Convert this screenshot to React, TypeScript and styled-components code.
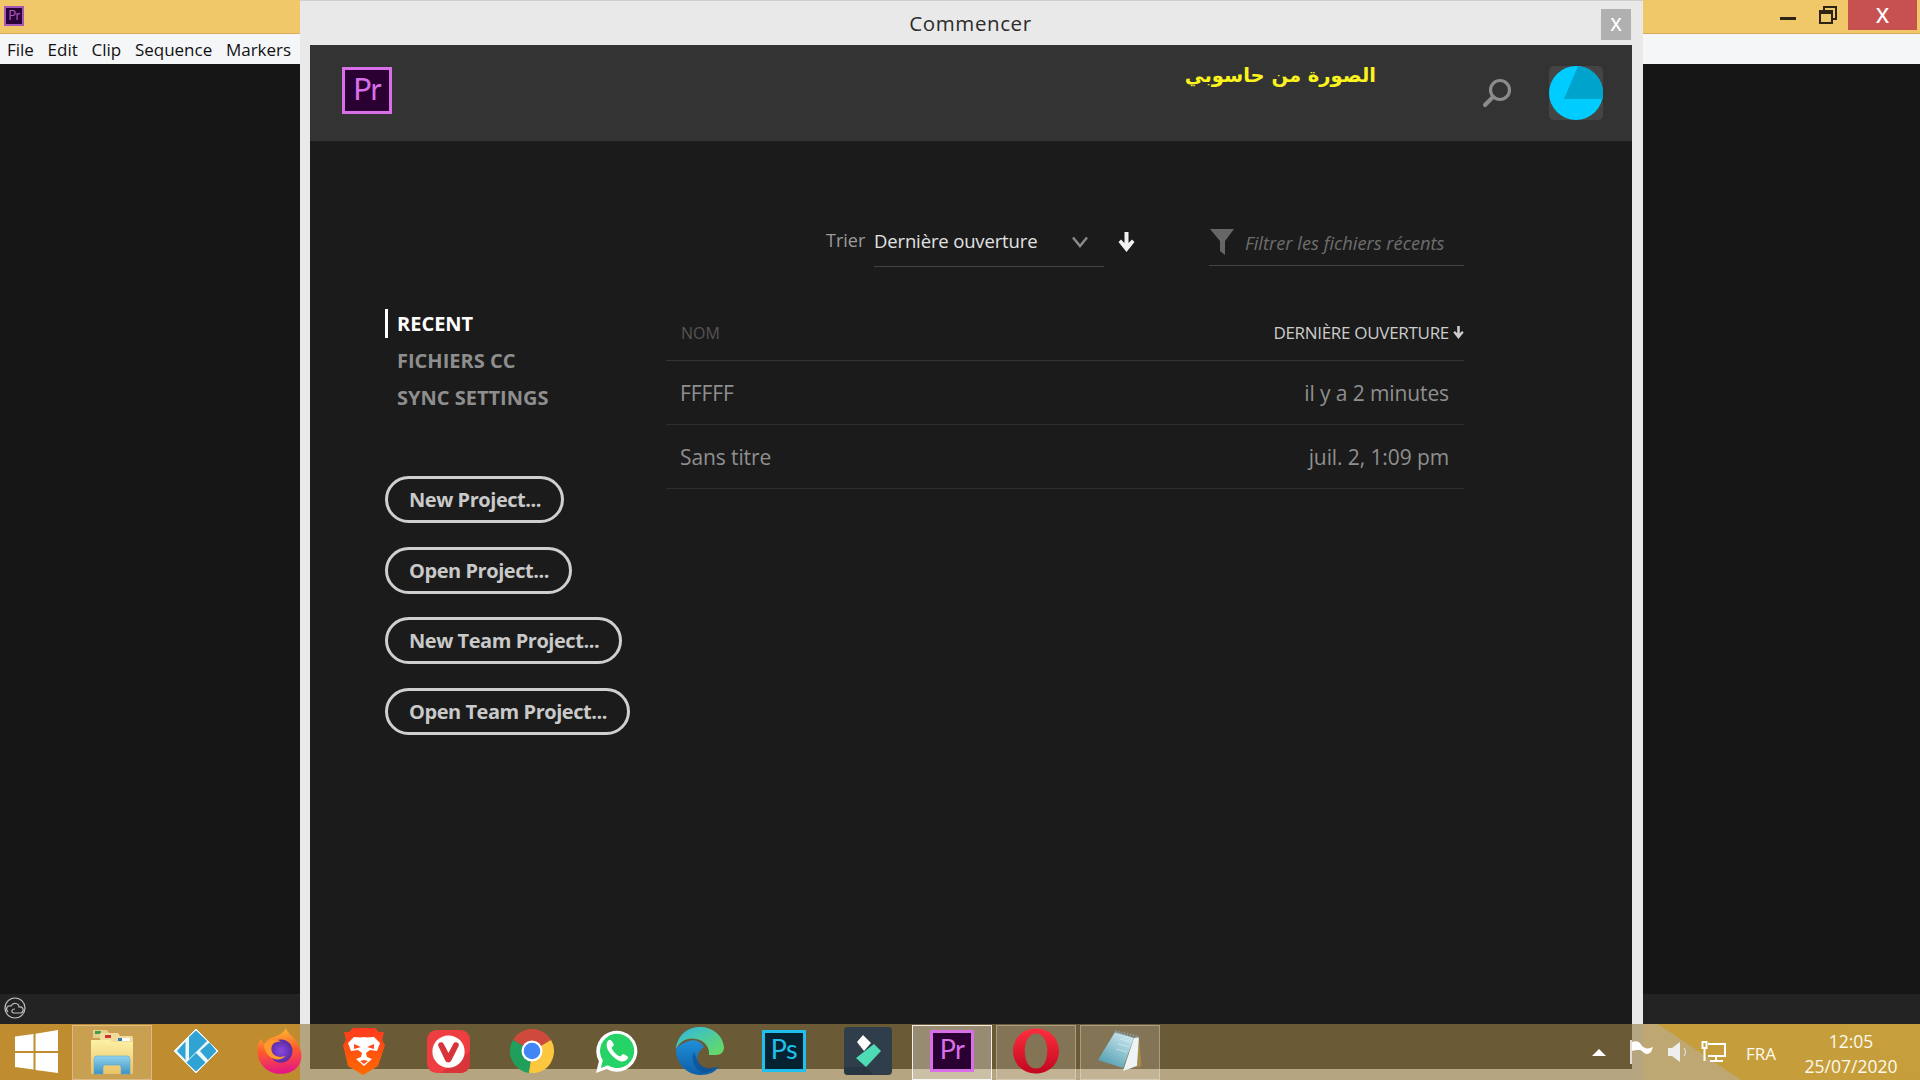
import React from 'react';
import styled, { createGlobalStyle } from 'styled-components';

const Global = createGlobalStyle`
  html, body { margin: 0; padding: 0; background: #161616; overflow: hidden; }
  * { box-sizing: border-box; }
`;

const UI = `"Open Sans", "Noto Sans", sans-serif`;

const Desktop = styled.div`
  position: relative;
  width: 1920px;
  height: 1080px;
  overflow: hidden;
  font-family: ${UI};
  background: linear-gradient(34deg, #bf8d30 0, #bf8d30 800px, #bba876 880px, #bfa772 973px, #c69d3b 974px, #cda645 100%);
`;

const BackWindow = styled.div`
  position: absolute;
  top: 0;
  left: 0;
  width: 1920px;
  height: 1024px;
  display: flex;
  flex-direction: column;
  background: #161616;
`;

const TitleBar = styled.div`
  height: 34px;
  flex: none;
  display: flex;
  align-items: flex-start;
  padding-left: 4px;
  padding-top: 6px;
  background: #f0c869;
  border-bottom: 1px solid #d9ab5b;
`;

const WindowControls = styled.div`
  position: absolute;
  top: 0;
  right: 3px;
  display: flex;
  align-items: flex-start;
`;

const ControlIcon = styled.div`
  width: 40px;
  height: 30px;
  display: flex;
  align-items: center;
  justify-content: center;
`;

const CloseControl = styled.div`
  width: 69px;
  height: 30px;
  padding-bottom: 3px;
  background: #c75050;
  color: #fff;
  font-family: "Liberation Sans", sans-serif;
  font-size: 27px;
  line-height: 24px;
  display: flex;
  align-items: center;
  justify-content: center;
`;

const MenuBar = styled.div`
  height: 30px;
  flex: none;
  display: flex;
  align-items: center;
  padding-left: 7px;
  gap: 13.7px;
  background: #f5f6f8;
  color: #111;
  font-size: 17px;
`;

const Workspace = styled.div`
  flex: 1;
  background: #161616;
`;

const StatusBar = styled.div`
  height: 30px;
  flex: none;
  padding: 0 0 3px 3px;
  display: flex;
  align-items: center;
  background: #232323;
`;

const Dialog = styled.div`
  position: absolute;
  top: 0;
  bottom: 0;
  left: 300px;
  width: 1343px;
  display: flex;
  flex-direction: column;
  background: #e9e9e9;
  border-top: 1px solid #cfcfcf;
`;

const DialogTitle = styled.div`
  height: 44px;
  flex: none;
  display: flex;
  align-items: center;
  justify-content: center;
  font-size: 20.5px;
  color: #2c2c2c;
  padding-right: 2px;
  letter-spacing: 0.6px;
`;

const DialogClose = styled.div`
  position: absolute;
  top: 8px;
  left: 1301px;
  width: 30px;
  height: 31px;
  padding-bottom: 4px;
  background: #b0b0b0;
  color: #fff;
  font-family: "Liberation Sans", sans-serif;
  font-size: 23px;
  line-height: 24px;
  display: flex;
  align-items: center;
  justify-content: center;
`;

const DialogInner = styled.div`
  flex: 1;
  margin: 0 11px 11px 10px;
  display: flex;
  flex-direction: column;
  background: #1b1b1b;
`;

const Header = styled.div`
  height: 96px;
  flex: none;
  display: flex;
  align-items: flex-start;
  background: #333333;
  padding: 21px 29px 0 32px;
`;

const LogoSlot = styled.div`
  margin-top: 1px;
  width: 50px;
  flex: none;
`;

const ArabicNote = styled.div`
  margin-left: 794px;
  margin-top: -2px;
  width: 190px;
  text-align: right;
  direction: rtl;
  white-space: nowrap;
  color: #fbf31d;
  font-family: "DejaVu Sans", sans-serif;
  font-weight: 700;
  font-size: 19.5px;
`;

const SearchSlot = styled.div`
  margin-left: 106px;
  margin-top: 12px;
  width: 30px;
  height: 30px;
`;

const AvatarBox = styled.div`
  margin-left: 37px;
  width: 54px;
  height: 54px;
  border-radius: 5px;
  background: #444444;
`;

const Body = styled.div`
  flex: 1;
  display: grid;
  grid-template-columns: 281px 798px;
  grid-template-rows: 163px 1fr;
  padding-left: 75px;
`;

const Toolbar = styled.div`
  grid-column: 2;
  display: flex;
  align-items: flex-start;
  padding-top: 85px;
  padding-left: 160px;
`;

const SortLabel = styled.span`
  width: 48px;
  flex: none;
  font-size: 18px;
  line-height: 28px;
  color: #9c9c9c;
`;

const SortSelect = styled.div`
  width: 230px;
  height: 41px;
  flex: none;
  display: flex;
  justify-content: space-between;
  border-bottom: 1px solid #444;
  padding-right: 16px;
  font-size: 18.5px;
  letter-spacing: -0.15px;
  line-height: 30px;
  color: #e2e2e2;
`;

const SortArrow = styled.div`
  width: 17px;
  margin-left: 14px;
  margin-top: 6px;
  flex: none;
`;

const FilterField = styled.div`
  margin-left: 74px;
  width: 255px;
  height: 40px;
  flex: none;
  display: flex;
  border-bottom: 1px solid #444;
  padding-left: 1px;
  font-size: 18.3px;
  font-style: italic;
  line-height: 33px;
  color: #6e6e6e;
  gap: 11px;
`;

const Sidebar = styled.div`
  grid-column: 1;
  padding-top: 5px;
`;

const Nav = styled.nav`
  display: flex;
  flex-direction: column;
  gap: 8px;
  align-items: flex-start;
`;

const NavItem = styled.div<{ $active?: boolean }>`
  height: 29px;
  line-height: 29px;
  font-size: 20px;
  font-weight: 700;
  letter-spacing: 0;
  padding-left: ${(p) => (p.$active ? '9px' : '12px')};
  border-left: ${(p) => (p.$active ? '3px solid #fff' : 'none')};
  color: ${(p) => (p.$active ? '#ffffff' : '#8e8e8e')};
`;

const Actions = styled.div`
  margin-top: 64px;
  display: flex;
  flex-direction: column;
  align-items: flex-start;
  gap: 23.67px;
`;

const PillButton = styled.div`
  height: 47px;
  display: flex;
  align-items: center;
  padding: 0 20px 0 21px;
  border: 3px solid #cfcfcf;
  border-radius: 24px;
  font-size: 20px;
  font-weight: 700;
  letter-spacing: -0.45px;
  color: #c9c9c9;
`;

const Table = styled.div`
  grid-column: 2;
  display: flex;
  flex-direction: column;
`;

const HeadRow = styled.div`
  height: 57px;
  display: flex;
  align-items: center;
  justify-content: space-between;
  padding: 1px 0 0 15px;
  border-bottom: 1px solid #333;
`;

const NameHead = styled.span`
  font-size: 16px;
  color: #555555;
`;

const DateHead = styled.span`
  display: flex;
  align-items: center;
  gap: 4px;
  font-size: 17px;
  color: #cccccc;
  letter-spacing: -0.3px;
`;

const Row = styled.div`
  height: 64px;
  display: flex;
  align-items: center;
  justify-content: space-between;
  padding: 0 15px 0 14px;
  border-bottom: 1px solid #2e2e2e;
  font-size: 21px;
  letter-spacing: -0.1px;
  color: #8f8f8f;
`;

const Glass = styled.div`
  position: absolute;
  left: 300px;
  width: 1343px;
  bottom: 0;
  height: 56px;
  background: rgba(152, 127, 69, 0.64);
`;

const Taskbar = styled.div`
  position: absolute;
  left: 0;
  right: 0;
  bottom: 0;
  height: 56px;
  display: flex;
  align-items: stretch;
  padding-left: 2px;
`;

const TaskSlot = styled.div<{ $w: number; $state?: 'hot' | 'open' | 'active' }>`
  width: ${(p) => p.$w}px;
  flex: none;
  margin: 1px 2px 0;
  padding-bottom: 3px;
  display: flex;
  align-items: center;
  justify-content: center;
  background: ${(p) =>
    p.$state === 'active' ? 'rgba(255,255,255,0.3)' : p.$state ? 'rgba(255,255,255,0.16)' : 'transparent'};
  border: ${(p) =>
    p.$state === 'active' ? '1px solid rgba(255,255,255,0.85)' : p.$state ? '1px solid rgba(255,255,255,0.3)' : '1px solid transparent'};
`;

const Tray = styled.div`
  margin-left: auto;
  display: flex;
  align-items: center;
  color: #fdf9ec;
  width: 336px;
  padding-left: 8px;
`;

const Lang = styled.span`
  margin-left: 20px;
  margin-top: 2px;
  font-size: 17px;
`;

const Clock = styled.div`
  margin-left: 26px;
  margin-top: 3px;
  width: 98px;
  text-align: center;
  font-size: 17.5px;
  line-height: 25px;
  white-space: nowrap;
`;

const PrLogo = ({ size = 50, h, stroke = '#d86fe8', bg = '#2a0033', label = 'Pr', w = 3, fs }: { size?: number; h?: number; stroke?: string; bg?: string; label?: string; w?: number; fs?: number }) => {
  const H = h ?? size;
  return (
    <svg width={size} height={H} viewBox={`0 0 ${size} ${H}`}>
      <rect x={w / 2} y={w / 2} width={size - w} height={H - w} fill={bg} stroke={stroke} strokeWidth={w} />
      <text x={size / 2} y={H * 0.7} textAnchor="middle" fontFamily="Lato, sans-serif" fontSize={fs ?? H * 0.64} letterSpacing="-0.5" fill={stroke}>{label}</text>
    </svg>
  );
};

const Winlogo = () => (
  <svg width="43" height="43" viewBox="0 0 43 43" fill="#fff">
    <path d="M0 6.5 18.5 4v17H0zM20.500 3.700 43 0v21H20.500zM0 23h18.500v16.600L0 37zM20.500 23H43v20l-22.500-3.100z" />
  </svg>
);

const Explorer = () => (
  <svg width="44" height="47" viewBox="0 0 44 47">
    <defs>
      <linearGradient id="fold" x1="0" y1="0" x2="0" y2="1"><stop offset="0" stopColor="#fdf0a5" /><stop offset="1" stopColor="#e8c468" /></linearGradient>
      <linearGradient id="blu" x1="0" y1="0" x2="0" y2="1"><stop offset="0" stopColor="#92d3ee" /><stop offset="1" stopColor="#3c93c6" /></linearGradient>
    </defs>
    <path d="M3 10V2h14l2 3v5z" fill="#e6cf8c" /><rect x="5" y="3" width="6" height="3" fill="#3e9e4a" />
    <path d="M10 13V5h18l2 3v5z" fill="#f1dc9c" /><rect x="15" y="7" width="6" height="3" fill="#c33" />
    <path d="M22 15V8h20l1 2v5z" fill="#f1dc9c" /><rect x="28" y="10" width="4" height="3" fill="#2e7fb4" /><rect x="32" y="10" width="8" height="3" fill="#fff" />
    <path d="M1 12h19l3 2h20v32H1z" fill="url(#fold)" />
    <path d="M4 46V31q0-3 3-3h30q3 0 3 3v15h-9v-7q0-2-2-2H15q-2 0-2 2v7z" fill="url(#blu)" stroke="#5da7cd" strokeWidth="0.6" />
  </svg>
);

const Kodi = () => (
  <svg width="44" height="44" viewBox="0 0 44 44">
    <path d="M22 0 44 22 22 44 0 22z" fill="#eef7fa" stroke="#eef7fa" strokeWidth="1" strokeLinejoin="round" />
    <path d="M15 8 22 1.500 33 12 15 30z" fill="#2fa3d3" />
    <path d="M11.500 12.500V31L3 22z" fill="#2fa3d3" />
    <path d="M26 22 35.500 13.500 42.500 22 34 31z" fill="#2fa3d3" />
    <path d="M12.500 33.500 22 24 31.500 33.500 22 42.500z" fill="#2fa3d3" />
  </svg>
);

const Firefox = () => (
  <svg width="46" height="46" viewBox="0 0 48 48">
    <defs>
      <linearGradient id="ff" x1="0.300" y1="0" x2="0.400" y2="1"><stop offset="0" stopColor="#ffc030" /><stop offset="0.500" stopColor="#ff5a2c" /><stop offset="1" stopColor="#e31587" /></linearGradient>
      <radialGradient id="ffp"><stop offset="0" stopColor="#8a49e0" /><stop offset="1" stopColor="#5b2aa3" /></radialGradient>
    </defs>
    <path d="M30 0c2 6 8 9 11 14 7 10 7 20 1 27-7 8-22 9-31 3C2 38-1 28 1 17c1-2 2-4 4-6 0 3 1 5 3 6 1-4 4-6 8-7 5-2 12-4 14-10z" fill="url(#ff)" />
    <circle cx="25" cy="24" r="12" fill="url(#ffp)" />
    <path d="M7 17c5-5 13-6 18-3-7 0-10 3-10 8 0 7 8 10 15 7-7 8-22 3-23-12z" fill="#ff9a2b" />
  </svg>
);

const Brave = () => (
  <svg width="42" height="47" viewBox="0 0 42 47">
    <defs><linearGradient id="br" x1="0" y1="0" x2="0" y2="1"><stop offset="0" stopColor="#ff3a1e" /><stop offset="1" stopColor="#ff6a00" /></linearGradient></defs>
    <path d="M10 0h22l4 4 5 0-2 8 3 5-7 21-15 9-15-9L0 17l3-5-2-8 5 0z" fill="url(#br)" />
    <path d="M21 9c-3 1-7 0-10 0l-6 6 3 8 7-1 4 3-1 4-5 2 8 7 8-7-5-2-1-4 4-3 7 1 3-8-6-6c-3 0-7 1-10 0z" fill="#fff" />
    <path d="M11 16l7 3-7 2zM31 16l-7 3 7 2zM17 33l4-1 4 1-4 3z" fill="#ff4b1e" />
  </svg>
);

const Vivaldi = () => (
  <svg width="43" height="43" viewBox="0 0 44 44">
    <rect width="44" height="44" rx="10" fill="#ef3e42" />
    <path d="M44 22v12c0 6-4 10-10 10H14z" fill="#d8343a" />
    <circle cx="22" cy="22" r="16.500" fill="#fff" />
    <path d="M11.500 16c-1-3 3.500-5 5.500-2l5 9.500 5-9.500c2-3 6.500-1 5.500 2l-7.500 15c-1.500 3-5 3-6.500 0z" fill="#d9333a" />
  </svg>
);

const Chrome = () => (
  <svg width="44" height="44" viewBox="0 0 44 44">
    <path d="M22 22 3 11A22 22 0 0 1 41 11z" fill="#cf4a3c" />
    <path d="M22 22 3 11a22 22 0 0 0 16 33z" fill="#1f9e5c" />
    <path d="M22 22 41 11a22 22 0 0 1-22 33z" fill="#fcc73e" />
    <circle cx="22" cy="22" r="10.500" fill="#fff" />
    <circle cx="22" cy="22" r="8.300" fill="#4285f4" />
  </svg>
);

const Whatsapp = () => (
  <svg width="43" height="45" viewBox="0 0 44 46">
    <path d="M1 45 4 33A21 21 0 1 1 12 41z" fill="#fff" />
    <path d="M6 40 8 32A17.500 17.500 0 1 1 13 37z" fill="#25d366" />
    <path d="M15 11c-3 1-4 5-2 10 3 6 8 10 13 12 4 1 7-1 8-4 0-1-5-4-6-3l-2 2c-3 0-8-5-9-9l2-2c1-1-2-6-4-6z" fill="#fff" />
  </svg>
);

const Edge = () => (
  <svg width="48" height="48" viewBox="0 0 48 48">
    <defs>
      <linearGradient id="eg1" x1="0" y1="0" x2="1" y2="1"><stop offset="0" stopColor="#2fb8e6" /><stop offset="1" stopColor="#6bdc5a" /></linearGradient>
      <linearGradient id="eg2" x1="0" y1="0" x2="0" y2="1"><stop offset="0" stopColor="#1f8fd8" /><stop offset="1" stopColor="#0d5fa8" /></linearGradient>
    </defs>
    <path d="M24 0C10 0 1 10 0 22c4-8 12-12 20-10 8 1 14 8 13 16h7c6 0 8-4 8-8C47 8 36 0 24 0z" fill="url(#eg1)" />
    <path d="M0 22C0 38 12 48 25 48c8 0 14-3 18-8-7 3-16 3-20-3-3-5-2-12 5-17-3-5-9-8-15-6C7 16 2 19 0 22z" fill="url(#eg2)" />
    <path d="M18 25c-4 8 1 18 10 21 6-1 11-3 15-7-7 3-16 3-20-3-2-3-3-7-5-11z" fill="#0b4f96" opacity=".7" />
  </svg>
);

const Filmora = () => (
  <svg width="48" height="48" viewBox="0 0 48 48">
    <rect width="48" height="48" rx="4" fill="#2f3e4a" />
    <path d="M0 40 22 40 30 48H4q-4 0-4-4z" fill="#283641" />
    <path d="M13 15 19 8 27 16 20 24z" fill="#fff" />
    <path d="M12 31 30 17 37 24 22 40z" fill="#4fdcb5" />
  </svg>
);

const Opera = () => (
  <svg width="46" height="46" viewBox="0 0 47 46">
    <defs><linearGradient id="op" x1="0" y1="0" x2="0" y2="1"><stop offset="0" stopColor="#ff2e3e" /><stop offset="1" stopColor="#c1071f" /></linearGradient></defs>
    <path fillRule="evenodd" d="M23.500 0C37 0 47 10 47 23S37 46 23.500 46 0 36 0 23 10 0 23.500 0zm0 5C16 5 12 13 12 23s4 18 11.500 18S35 33 35 23 31 5 23.500 5z" fill="url(#op)" />
  </svg>
);

const Notepad = () => (
  <svg width="44" height="42" viewBox="0 0 44 42">
    <defs><linearGradient id="np" x1="0.800" y1="0" x2="0.200" y2="1"><stop offset="0" stopColor="#cfeaf2" /><stop offset="1" stopColor="#4f9bae" /></linearGradient></defs>
    <path d="M41 7 43.500 36 39 38z" fill="#a88a48" />
    <path d="M36 8 41 7 39 36 25 41z" fill="#eef3f6" />
    <path d="M17 2 36 8 25 38 0 30z" fill="url(#np)" />
    <path d="M17 1.500 41 7" stroke="#8a9aa2" strokeWidth="3" strokeDasharray="1.500 1.500" />
    <path d="M22 9 33 12M20 14 31 17M18 19 29 22" stroke="#e5f4f8" strokeWidth="0.800" opacity=".7" />
  </svg>
);

const CloudIcon = () => (
  <svg width="24" height="22" viewBox="0 0 24 22" fill="none" stroke="#bdbdbd" strokeWidth="1.200">
    <circle cx="12" cy="11" r="10" />
    <path d="M5 15c-3-3-1-7 3-6 2-4 8-3 8 1 4-1 6 4 2 6H11c-3 0-3-4 1-4" />
  </svg>
);

const SearchIcon = () => (
  <svg width="30" height="30" viewBox="0 0 30 30" fill="none" stroke="#8c8c8c">
    <circle cx="18" cy="12" r="9.500" strokeWidth="3.200" />
    <path d="M11 19 3 27" strokeWidth="4" strokeLinecap="round" />
  </svg>
);

const Avatar = () => (
  <svg width="54" height="54" viewBox="0 0 54 54">
    <circle cx="27" cy="27" r="27" fill="#00ccff" />
    <path d="M29 0A27 27 0 0 1 54 27v6H15z" fill="#00a3cc" />
  </svg>
);

const Chevron = () => (
  <svg width="16" height="12" viewBox="0 0 16 12" fill="none" stroke="#8a8a8a" strokeWidth="2.400" style={{ marginTop: 10 }}>
    <path d="M1 1.500 8 10l7-8.500" />
  </svg>
);

const DownArrow = ({ w = 17, h = 20, c = '#f2f2f2' }: { w?: number; h?: number; c?: string }) => (
  <svg width={w} height={h} viewBox="0 0 17 20" fill={c}>
    <path d="M6.500 0h4v11l3.500-3.500 2.500 2.500L8.500 20 .5 10 3 7.500 6.500 11z" />
  </svg>
);

const Funnel = () => (
  <svg width="24" height="26" viewBox="0 0 24 26" fill="#666666" style={{ flex: 'none', marginTop: 3 }}>
    <path d="M0 0h24L15 12v14l-5-4V12z" />
  </svg>
);

const Minimize = () => <svg width="16" height="4" viewBox="0 0 16 4" style={{ marginTop: 8 }}><rect width="16" height="3" fill="#2c2516" /></svg>;
const Restore = () => (
  <svg width="18" height="18" viewBox="0 0 18 18" fill="none" stroke="#2c2516" strokeWidth="2">
    <rect x="1" y="5" width="12" height="12" />
    <path d="M5 5V1h12v12h-4" />
    <path d="M1 6.500h12" strokeWidth="3" />
  </svg>
);

const TrayTriangle = () => <svg width="14" height="7" viewBox="0 0 14 7"><path d="M7 0 14 7H0z" fill="#fff" /></svg>;
const Flag = () => (
  <svg width="24" height="24" viewBox="0 0 24 24" style={{ marginLeft: 24 }}>
    <path d="M1 0v24" stroke="#fff" strokeWidth="1.600" />
    <path d="M2 2c5-2 8 0 10 4 3 3 7 3 11 1-1 3-2 7-6 7-3 0-4-3-7-4-3 0-6 0-8 1z" fill="#fff" />
  </svg>
);
const Speaker = () => (
  <svg width="21" height="20" viewBox="0 0 21 20" style={{ marginLeft: 14 }}>
    <path d="M0 6h4l8-6v20l-8-6H0z" fill="#eee" />
    <path d="M16 6q3 4 0 8" stroke="#ddd" fill="none" strokeWidth="1.200" />
  </svg>
);
const Network = () => (
  <svg width="25" height="22" viewBox="0 0 25 22" fill="none" stroke="#fff" strokeWidth="2" style={{ marginLeft: 12 }}>
    <rect x="1.500" y="1" width="4" height="6" />
    <path d="M3.500 7v13" />
    <path d="M7 3h17v12H7M15 15v4M9 20h13" />
  </svg>
);

const rows = [
  { name: 'FFFFF', when: 'il y a 2 minutes' },
  { name: 'Sans titre', when: 'juil. 2, 1:09 pm' },
];
const menus = ['File', 'Edit', 'Clip', 'Sequence', 'Markers'];
const actions = ['New Project...', 'Open Project...', 'New Team Project...', 'Open Team Project...'];

export default function App() {
  return (
    <Desktop>
      <Global />
      <BackWindow>
        <TitleBar><PrLogo size={20} stroke="#a657b8" bg="#2a0038" w={2} fs={13} /></TitleBar>
        <WindowControls>
          <ControlIcon><Minimize /></ControlIcon>
          <ControlIcon><Restore /></ControlIcon>
          <CloseControl>x</CloseControl>
        </WindowControls>
        <MenuBar>{menus.map((m) => <span key={m}>{m}</span>)}</MenuBar>
        <Workspace />
        <StatusBar><CloudIcon /></StatusBar>
      </BackWindow>

      <Dialog>
        <DialogTitle>Commencer</DialogTitle>
        <DialogClose>x</DialogClose>
        <DialogInner>
          <Header>
            <LogoSlot><PrLogo size={50} h={47} /></LogoSlot>
            <ArabicNote>الصورة من حاسوبي</ArabicNote>
            <SearchSlot><SearchIcon /></SearchSlot>
            <AvatarBox><Avatar /></AvatarBox>
          </Header>
          <Body>
            <Toolbar>
              <SortLabel>Trier</SortLabel>
              <SortSelect><span>Dernière ouverture</span><Chevron /></SortSelect>
              <SortArrow><DownArrow /></SortArrow>
              <FilterField><Funnel /><span>Filtrer les fichiers récents</span></FilterField>
            </Toolbar>
            <Sidebar>
              <Nav>
                <NavItem $active>RECENT</NavItem>
                <NavItem>FICHIERS CC</NavItem>
                <NavItem>SYNC SETTINGS</NavItem>
              </Nav>
              <Actions>{actions.map((a) => <PillButton key={a}>{a}</PillButton>)}</Actions>
            </Sidebar>
            <Table>
              <HeadRow>
                <NameHead>NOM</NameHead>
                <DateHead>DERNIÈRE OUVERTURE <DownArrow w={11} h={13} c="#cccccc" /></DateHead>
              </HeadRow>
              {rows.map((r) => (
                <Row key={r.name}><span>{r.name}</span><span>{r.when}</span></Row>
              ))}
            </Table>
          </Body>
        </DialogInner>
      </Dialog>
      <Glass />

      <Taskbar>
        <TaskSlot $w={64}><Winlogo /></TaskSlot>
        <TaskSlot $w={80} $state="hot"><Explorer /></TaskSlot>
        <TaskSlot $w={80}><Kodi /></TaskSlot>
        <TaskSlot $w={80}><Firefox /></TaskSlot>
        <TaskSlot $w={80}><Brave /></TaskSlot>
        <TaskSlot $w={80}><Vivaldi /></TaskSlot>
        <TaskSlot $w={80}><Chrome /></TaskSlot>
        <TaskSlot $w={80}><Whatsapp /></TaskSlot>
        <TaskSlot $w={80}><Edge /></TaskSlot>
        <TaskSlot $w={80}><PrLogo size={44} h={42} stroke="#1fc0ee" bg="#062230" label="Ps" /></TaskSlot>
        <TaskSlot $w={80}><Filmora /></TaskSlot>
        <TaskSlot $w={80} $state="active"><PrLogo size={44} h={42} /></TaskSlot>
        <TaskSlot $w={80} $state="open"><Opera /></TaskSlot>
        <TaskSlot $w={80} $state="open"><Notepad /></TaskSlot>
        <Tray>
          <TrayTriangle />
          <Flag />
          <Speaker />
          <Network />
          <Lang>FRA</Lang>
          <Clock>12:05<br />25/07/2020</Clock>
        </Tray>
      </Taskbar>
    </Desktop>
  );
}
